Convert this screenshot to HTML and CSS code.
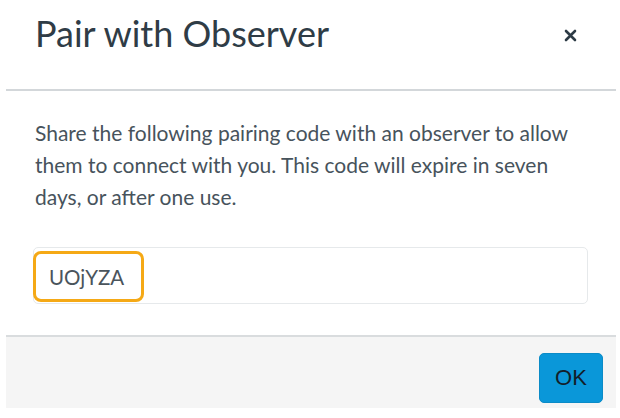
FILE: index.html
```html
<!DOCTYPE html>
<html>
<head>
<meta charset="utf-8">
<link rel="stylesheet" href="styles.css">
</head>
<body>
<div class="modal">
  <header class="modal-header">
    <h1 class="modal-title">Pair with Observer</h1>
    <button class="close" aria-label="Close">
      <svg width="13" height="13" viewBox="0 0 13 13"><path d="M2 2L11 11M11 2L2 11" stroke="#2d3b45" stroke-width="2.6" stroke-linecap="round"/></svg>
    </button>
  </header>
  <div class="modal-body">
    <p class="desc">Share the following pairing code with an observer to allow them to connect with you. This code will expire in seven days, or after one use.</p>
    <div class="code-field">
      <span class="code">UOjYZA</span>
    </div>
  </div>
  <footer class="modal-footer">
    <button class="ok">OK</button>
  </footer>
</div>
</body>
</html>
```
FILE: styles.css
```css
* { box-sizing: border-box; }
html, body { margin: 0; padding: 0; background: #fff; }
body { font-family: Lato, "Open Sans", sans-serif; color: #2d3b45; }
.modal { margin: 0 4px 0 6px; display: flex; flex-direction: column; }
.modal-header {
  height: 91px;
  display: flex;
  align-items: center;
  justify-content: space-between;
  padding: 0 39px 23px 29px;
  border-bottom: 2px solid #d3d7da;
}
.modal-title { margin: 0; font-weight: 400; font-size: 36px; color: #2f3c46; letter-spacing: 0; }
.close { background: none; border: 0; padding: 0; width: 13px; height: 13px; display: flex; margin-top: 4px; }
.modal-body { padding: 26px 28px 0 27px; height: 244px; }
.desc { margin: 0 0 34px 2px; font-size: 21px; font-weight: 400; line-height: 32px; color: #47535c; width: 540px; }
.code-field {
  height: 57px;
  border: 1px solid #e6e9eb;
  border-radius: 5px;
  display: flex;
  align-items: stretch;
}
.code {
  display: flex; align-items: center;
  border: 3px solid #f5a916;
  border-radius: 8px;
  padding: 0 17px 0 13px;
  margin: 3px 0 1px -1px;
  font-size: 20.5px;
  color: #4a545c;
}
.modal-footer {
  height: 73px;
  background: #f5f5f5;
  border-top: 2px solid #d9dcde;
  display: flex; align-items: flex-start; justify-content: flex-end;
  padding: 16px 13px 0 0;
}
.ok {
  width: 64px; height: 50px;
  background: #0a97d9;
  border: 1px solid #0b8bc7;
  border-radius: 5px;
  color: #13202a;
  font-family: "Liberation Sans", Arial, sans-serif;
  font-size: 22px;
  padding: 0;
}
```
